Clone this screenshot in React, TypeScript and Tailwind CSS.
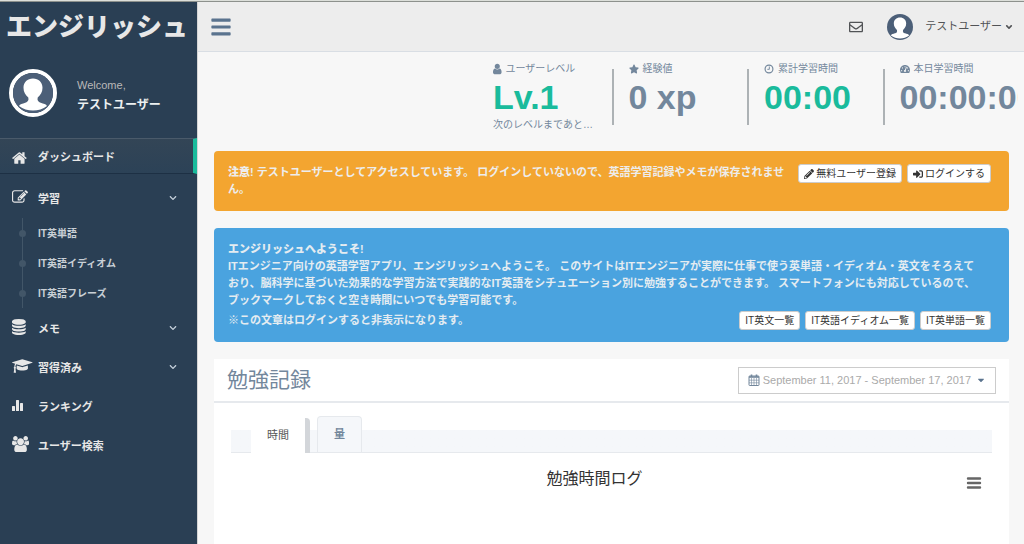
import React from 'react';
import {
  FaAngleDown,
  FaBars,
  FaCaretDown,
  FaChevronDown,
  FaPencilAlt,
  FaRegEnvelope,
  FaSignInAlt,
  FaStar,
  FaTachometerAlt,
} from 'react-icons/fa';

type IconProps = { className?: string };

// The paths use font units, so the y axis is flipped
const FontIcon = ({ width, d, className }: { width: number; d: string; className?: string }) => (
  <svg viewBox={`0 0 ${width} 1792`} fill="currentColor" className={className} aria-hidden="true">
    <path transform="translate(0 1536) scale(1 -1)" d={d} />
  </svg>
);

const HomeIcon = ({ className }: IconProps) => (
  <FontIcon
    width={1664}
    className={className}
    d="M1408 544v-480q0 -26 -19 -45t-45 -19h-384v384h-256v-384h-384q-26 0 -45 19t-19 45v480q0 1 0.5 3t0.5 3l575 474l575 -474q1 -2 1 -6zM1631 613l-62 -74q-8 -9 -21 -11h-3q-13 0 -21 7l-692 577l-692 -577q-12 -8 -24 -7q-13 2 -21 11l-62 74q-8 10 -7 23.5t11 21.5l719 599q32 26 76 26t76 -26l244 -204v195q0 14 9 23t23 9h192q14 0 23 -9t9 -23v-408l219 -182q10 -8 11 -21.5t-7 -23.5z"
  />
);

const EditIcon = ({ className }: IconProps) => (
  <FontIcon
    width={1792}
    className={className}
    d="M888 352l116 116l-152 152l-116 -116v-56h96v-96h56zM1328 1072q-16 16 -33 -1l-350 -350q-17 -17 -1 -33t33 1l350 350q17 17 1 33zM1408 478v-190q0 -119 -84.5 -203.5t-203.5 -84.5h-832q-119 0 -203.5 84.5t-84.5 203.5v832q0 119 84.5 203.5t203.5 84.5h832q63 0 117 -25q15 -7 18 -23q3 -17 -9 -29l-49 -49q-14 -14 -32 -8q-23 6 -45 6h-832q-66 0 -113 -47t-47 -113v-832q0 -66 47 -113t113 -47h832q66 0 113 47t47 113v126q0 13 9 22l64 64q15 15 35 7t20 -29zM1312 1216l288 -288l-672 -672h-288v288zM1756 1084l-92 -92l-288 288l92 92q28 28 68 28t68 -28l152 -152q28 -28 28 -68t-28 -68z"
  />
);

const DatabaseIcon = ({ className }: IconProps) => (
  <FontIcon
    width={1536}
    className={className}
    d="M768 768q237 0 443 43t325 127v-170q0 -69 -103 -128t-280 -93.5t-385 -34.5t-385 34.5t-280 93.5t-103 128v170q119 -84 325 -127t443 -43zM768 0q237 0 443 43t325 127v-170q0 -69 -103 -128t-280 -93.5t-385 -34.5t-385 34.5t-280 93.5t-103 128v170q119 -84 325 -127t443 -43zM768 384q237 0 443 43t325 127v-170q0 -69 -103 -128t-280 -93.5t-385 -34.5t-385 34.5t-280 93.5t-103 128v170q119 -84 325 -127t443 -43zM768 1536q208 0 385 -34.5t280 -93.5t103 -128v-128q0 -69 -103 -128t-280 -93.5t-385 -34.5t-385 34.5t-280 93.5t-103 128v128q0 69 103 128t280 93.5t385 34.5z"
  />
);

const CapIcon = ({ className }: IconProps) => (
  <FontIcon
    width={2304}
    className={className}
    d="M1774 700l18 -316q4 -69 -82 -128t-235 -93.5t-323 -34.5t-323 34.5t-235 93.5t-82 128l18 316l574 -181q22 -7 48 -7t48 7zM2304 1024q0 -23 -22 -31l-1120 -352q-4 -1 -10 -1t-10 1l-652 206q-43 -34 -71 -111.5t-34 -178.5q63 -36 63 -109q0 -69 -58 -107l58 -433q2 -14 -8 -25q-9 -11 -24 -11h-192q-15 0 -24 11q-10 11 -8 25l58 433q-58 38 -58 107q0 73 65 111q11 207 98 330l-333 104q-22 8 -22 31t22 31l1120 352q4 1 10 1t10 -1l1120 -352q22 -8 22 -31z"
  />
);

const UsersIcon = ({ className }: IconProps) => (
  <FontIcon
    width={1920}
    className={className}
    d="M593 640q-162 -5 -265 -128h-134q-82 0 -138 40.5t-56 118.5q0 353 124 353q6 0 43.5 -21t97.5 -42.5t119 -21.5q67 0 133 23q-5 -37 -5 -66q0 -139 81 -256zM1664 3q0 -120 -73 -189.5t-194 -69.5h-874q-121 0 -194 69.5t-73 189.5q0 53 3.5 103.5t14 109t26.5 108.5t43 97.5t62 81t85.5 53.5t111.5 20q10 0 43 -21.5t73 -48t107 -48t135 -21.5t135 21.5t107 48t73 48t43 21.5q61 0 111.5 -20t85.5 -53.5t62 -81t43 -97.5t26.5 -108.5t14 -109t3.5 -103.5zM640 1280q0 -106 -75 -181t-181 -75t-181 75t-75 181t75 181t181 75t181 -75t75 -181zM1344 896q0 -159 -112.5 -271.5t-271.5 -112.5t-271.5 112.5t-112.5 271.5t112.5 271.5t271.5 112.5t271.5 -112.5t112.5 -271.5zM1920 671q0 -78 -56 -118.5t-138 -40.5h-134q-103 123 -265 128q81 117 81 256q0 29 -5 66q66 -23 133 -23q59 0 119 21.5t97.5 42.5t43.5 21q124 0 124 -353zM1792 1280q0 -106 -75 -181t-181 -75t-181 75t-75 181t75 181t181 75t181 -75t75 -181z"
  />
);

const UserIcon = ({ className }: IconProps) => (
  <FontIcon
    width={1280}
    className={className}
    d="M1280 137q0 -109 -62.5 -187t-150.5 -78h-854q-88 0 -150.5 78t-62.5 187q0 85 8.5 160.5t31.5 152t58.5 131t94 89t134.5 34.5q131 -128 313 -128t313 128q76 0 134.5 -34.5t94 -89t58.5 -131t31.5 -152t8.5 -160.5zM1024 1024q0 -159 -112.5 -271.5t-271.5 -112.5t-271.5 112.5t-112.5 271.5t112.5 271.5t271.5 112.5t271.5 -112.5t112.5 -271.5z"
  />
);

const RankingIcon = ({ className }: IconProps) => (
  <svg viewBox="0 0 12 12" fill="currentColor" className={className} aria-hidden="true">
    <rect x="0" y="7" width="3" height="5" rx="0.5" />
    <rect x="4" y="1" width="3" height="11" rx="0.5" />
    <rect x="8" y="4" width="3" height="8" rx="0.5" />
  </svg>
);

const ClockIcon = ({ className }: IconProps) => (
  <svg viewBox="0 0 12 12" fill="none" stroke="currentColor" className={className} aria-hidden="true">
    <circle cx="6" cy="6" r="4.7" strokeWidth="1.4" />
    <path d="M6.4 3v3.4H4" strokeWidth="1.1" />
  </svg>
);

const CalendarIcon = ({ className }: IconProps) => (
  <svg viewBox="0 0 12 12" fill="none" stroke="currentColor" className={className} aria-hidden="true">
    <rect x="1" y="2" width="10" height="9.5" rx="0.6" strokeWidth="1" />
    <path d="M1 3h10" strokeWidth="1.6" />
    <path d="M3.5 0.4v2.6M8.5 0.4v2.6" strokeWidth="1.6" />
    <path d="M1 6.2h10M1 8.8h10M3.5 4v7.5M6 4v7.5M8.5 4v7.5" strokeWidth="0.6" />
  </svg>
);

const Avatar = ({ className }: IconProps) => (
  <svg viewBox="0 0 40 40" className={className} role="img" aria-label="テストユーザー">
    <circle cx="20" cy="20" r="20" fill="#4c5f78" />
    <path
      fill="#fff"
      d="M20 5.500c-5.600 0-9.500 3.800-9.500 9.300 0 4 1.900 7.600 4.800 9.700.7 2.800-.4 4.400-3 5.300-2.900.9-5.400 1.500-6.300 3.100C10 36.200 14.800 37.500 20 37.500S30 36.200 34 32.900c-.9-1.600-3.400-2.200-6.300-3.100-2.600-.9-3.700-2.500-3-5.300 2.900-2.100 4.800-5.700 4.800-9.700 0-5.500-3.900-9.300-9.500-9.300z"
    />
  </svg>
);

const studyLinks = ['IT英単語', 'IT英語イディオム', 'IT英語フレーズ'];

type MenuItemProps = { icon: React.ReactNode; label: string; expandable?: boolean };

const MenuItem = ({ icon, label, expandable }: MenuItemProps) => (
  <a href="#" className="flex h-[39px] items-center pr-5 pl-3 font-bold">
    <span className="flex w-[26px] shrink-0 pb-0.5">{icon}</span>
    <span className="flex-1 pt-[3px]">{label}</span>
    {expandable && <FaChevronDown className="size-2 text-[#c4cfda]" />}
  </a>
);

const Sidebar = () => (
  <aside className="w-[197px] shrink-0 bg-[#2a3f54] text-[11px] text-[#e7e7e7]">
    <a href="#" className="flex h-[50px] items-center pl-1.5 text-[26px] leading-none font-black whitespace-nowrap">
      エンジリッシュ
    </a>

    <div className="flex h-[86px] items-center pb-1 pl-[9px]">
      <span className="flex size-12 shrink-0 rounded-full border-4 border-white bg-[#2a3f54]">
        <Avatar className="size-full" />
      </span>
      <div className="pt-1 pl-5">
        <p className="leading-5 text-[#bab8b8]">Welcome,</p>
        <p className="text-xs leading-5 font-bold text-[#ecf0f1]">テストユーザー</p>
      </div>
    </div>

    <nav>
      <a
        href="#"
        className="mb-1 flex h-9 items-center border-t border-r-4 border-b border-t-[#4a5a6a] border-r-[#1abb9c] border-b-[#1d3044] bg-linear-to-b from-[#334556] to-[#2c4257] pt-[3px] pl-3 font-bold"
      >
        <span className="flex w-[26px] shrink-0">
          <HomeIcon className="h-4" />
        </span>
        ダッシュボード
      </a>
      <MenuItem icon={<EditIcon className="h-4" />} label="学習" expandable />
      <ul className="mt-px ml-[22px] border-l border-[#425668]">
        {studyLinks.map((label) => (
          <li key={label}>
            <a href="#" className="flex h-[30px] items-center text-[10px] font-bold text-[#c9d0d6]">
              <span className="-ml-1 size-[7px] rounded-full bg-[#425668]" />
              <span className="pl-3">{label}</span>
            </a>
          </li>
        ))}
      </ul>
      <MenuItem icon={<DatabaseIcon className="h-4" />} label="メモ" expandable />
      <MenuItem icon={<CapIcon className="h-4" />} label="習得済み" expandable />
      <MenuItem icon={<RankingIcon className="h-3" />} label="ランキング" />
      <MenuItem icon={<UsersIcon className="h-4" />} label="ユーザー検索" />
    </nav>
  </aside>
);

const TopBar = () => (
  <header className="flex h-[50px] items-center border-b border-[#d9dee4] bg-[#ededed] pr-2.5 pl-3 text-[11px] text-[#515356]">
    <button type="button" aria-label="メニュー" className="text-[#5a738e]">
      <FaBars className="size-[22px]" />
    </button>
    <button type="button" aria-label="メッセージ" className="ml-auto">
      <FaRegEnvelope className="size-3.5" />
    </button>
    <button type="button" className="ml-6 flex items-center">
      <Avatar className="size-[26px]" />
      <span className="pl-3">テストユーザー</span>
      <FaAngleDown className="ml-0.5 size-2.5" />
    </button>
  </header>
);

type StatProps = { icon: React.ReactNode; label: string; value: string; note?: string; first?: boolean; green?: boolean };

const Stat = ({ icon, label, value, note, first, green }: StatProps) => (
  <div className="flex min-w-0 items-start">
    <div className={first ? 'mt-2 h-14 w-0.5 shrink-0' : 'mt-2 h-14 w-0.5 shrink-0 bg-[#adb2b5]'} />
    <div className="min-w-0 flex-1 overflow-hidden pl-[15px] whitespace-nowrap">
      <p className="flex items-center gap-1 text-[10px] leading-4">
        {icon}
        {label}
      </p>
      <p className={green ? 'text-[34px] leading-10 font-bold text-[#1abb9c]' : 'text-[34px] leading-10 font-bold'}>
        {value}
      </p>
      {note && <p className="text-[10px] leading-4">{note}</p>}
    </div>
  </div>
);

const SmallButton = ({ children }: { children: React.ReactNode }) => (
  <button
    type="button"
    className="flex h-[19px] items-center gap-0.5 rounded-[3px] border border-[#ccc] bg-white px-[5px] text-[10px] leading-none font-normal whitespace-nowrap text-[#333]"
  >
    {children}
  </button>
);

const App: React.FC = () => {
  return (
    <div className="flex min-h-screen flex-col border-t border-[#dcdfda] bg-[#f7f7f7] font-['Liberation_Sans','Noto_Sans_CJK_JP',sans-serif] text-[#73879c]">
      <div className="flex flex-1 border-t border-[#8d918d]">
        <Sidebar />

        <div className="flex min-w-0 flex-1 flex-col border-l border-[#d5d5d5]">
          <TopBar />

          {/* Summary tiles */}
          <section className="flex justify-end pt-[9px] pr-1.5">
            <div className="grid w-[542px] max-w-full grid-cols-4">
              <Stat first green icon={<UserIcon className="h-3" />} label="ユーザーレベル" value="Lv.1" note="次のレベルまであと…" />
              <Stat icon={<FaStar className="size-2.5" />} label="経験値" value="0 xp" />
              <Stat green icon={<ClockIcon className="size-2.5" />} label="累計学習時間" value="00:00" />
              <Stat icon={<FaTachometerAlt className="size-2.5" />} label="本日学習時間" value="00:00:00" />
            </div>
          </section>

          <main className="flex flex-1 flex-col pt-[18px] pr-[15px] pl-4 text-[11px] leading-[17px]">
            {/* Guest notice */}
            <div className="flex h-[60px] items-start gap-1 rounded bg-[#f3a530] pt-[13px] pr-[18px] pl-3.5 text-[#ededed]">
              <p className="flex-1 font-bold">
                <strong className="font-black">注意!</strong> テストユーザーとしてアクセスしています。 ログインしていないので、英語学習記録やメモが保存されません。
              </p>
              <div className="flex gap-[5px]">
                <SmallButton>
                  <FaPencilAlt className="size-2.5" />
                  無料ユーザー登録
                </SmallButton>
                <SmallButton>
                  <FaSignInAlt className="size-2.5" />
                  ログインする
                </SmallButton>
              </div>
            </div>

            {/* Welcome message */}
            <div className="mt-[17px] rounded bg-[#4aa3df] pt-[13px] pr-[18px] pb-3 pl-3.5 font-bold text-[#e4ecf1]">
              <p className="font-black">エンジリッシュへようこそ!</p>
              <p className="pr-3">
                ITエンジニア向けの英語学習アプリ、エンジリッシュへようこそ。 このサイトはITエンジニアが実際に仕事で使う英単語・イディオム・英文をそろえており、脳科学に基づいた効果的な学習方法で実践的なIT英語をシチュエーション別に勉強することができます。 スマートフォンにも対応しているので、ブックマークしておくと空き時間にいつでも学習可能です。
              </p>
              <div className="mt-0.5 flex items-center justify-between">
                <p>※この文章はログインすると非表示になります。</p>
                <div className="flex gap-[5px]">
                  <SmallButton>IT英文一覧</SmallButton>
                  <SmallButton>IT英語イディオム一覧</SmallButton>
                  <SmallButton>IT英単語一覧</SmallButton>
                </div>
              </div>
            </div>

            {/* Study record */}
            <section className="mt-[17px] flex-1 bg-white">
              <div className="flex h-11 items-center justify-between border-b-2 border-[#e6e9ed] pr-[13px] pl-[13px]">
                <h2 className="text-[21px] leading-6">勉強記録</h2>
                <button
                  type="button"
                  className="flex h-[27px] items-center gap-[3px] border border-[#ccc] px-[9px] whitespace-nowrap text-[#aaa]"
                >
                  <CalendarIcon className="size-3 text-[#73879c]" />
                  September 11, 2017 - September 17, 2017
                  <FaCaretDown className="ml-0.5 size-2.5 text-[#5a738e]" />
                </button>
              </div>

              <div className="px-[17px] pt-[13px]">
                <div
                  role="tablist"
                  className="flex items-end border-b border-[#e6e9ed] bg-linear-to-b from-white from-[14px] to-[#f5f7fa] to-[14px] pl-5"
                >
                  <button
                    type="button"
                    role="tab"
                    aria-selected="true"
                    className="-mb-px h-[35px] rounded-tr border-r-5 border-[#d3d6da] bg-white px-4 text-[#555]"
                  >
                    時間
                  </button>
                  <button
                    type="button"
                    role="tab"
                    aria-selected="false"
                    className="ml-[7px] h-9 rounded-t border border-b-0 border-[#e6e9ed] bg-[#f5f7fa] px-4 font-bold"
                  >
                    量
                  </button>
                </div>

                <div className="flex items-center pt-3.5 pr-2.5">
                  <h3 className="flex-1 text-center text-base leading-6 text-[#333]">勉強時間ログ</h3>
                  <button type="button" aria-label="チャートメニュー" className="ml-2 pt-2 text-[#666]">
                    <svg viewBox="0 0 16 12" className="h-3 w-4" stroke="currentColor" strokeWidth="2.4" strokeLinecap="round" aria-hidden="true">
                      <path d="M2 1.500h12M2 6h12M2 10.500h12" />
                    </svg>
                  </button>
                </div>
              </div>
            </section>
          </main>
        </div>
      </div>
    </div>
  );
};

export default App;
